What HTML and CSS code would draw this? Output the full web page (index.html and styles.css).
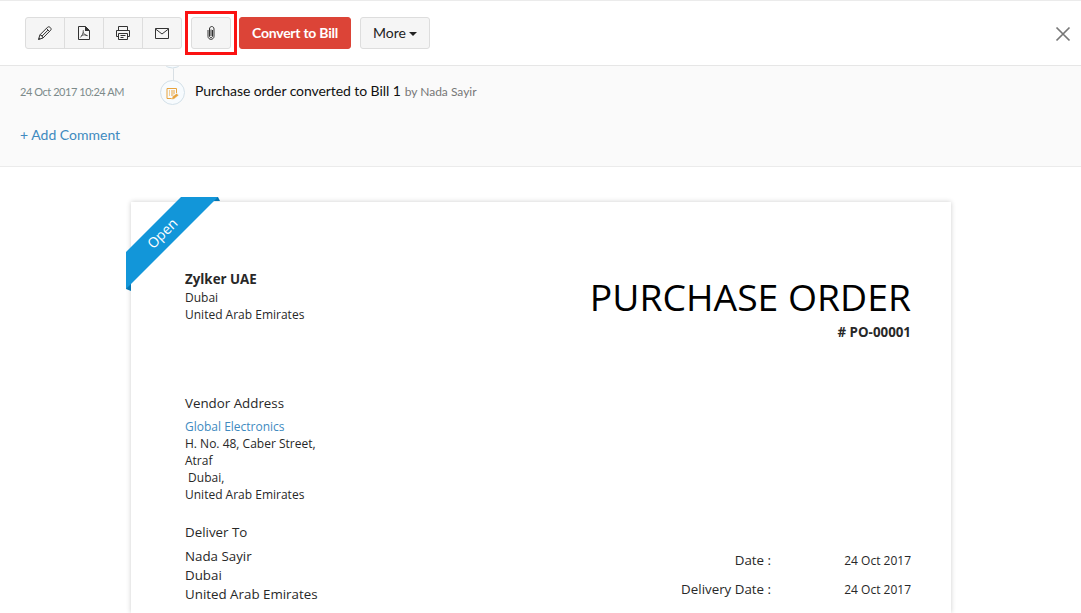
FILE: index.html
```html
<!DOCTYPE html>
<html lang="en">
<head>
  <meta charset="UTF-8" />
  <meta name="viewport" content="width=device-width, initial-scale=1.0"/>
  <title>Purchase Order</title>
  <link rel="stylesheet" href="styles.css">
</head>
<body>
  <header class="toolbar">
    <div class="btn-group">
      <button class="btn" aria-label="Edit">
        <svg width="16" height="16" viewBox="0 0 16 16"><path d="M1.5 14.5l1.4-4.6L10.6 2.2c1.5-1.5 4.7 1.4 3.1 3L6 13zM2.9 9.9c1.6.1 2.900 1.400 3.100 3.100M9.400 3.400l3.100 3.100M4.800 11.300l6.200-6.200"/><path class="fill" d="M1.3 14.7l.7-2.2 1.500 1.500z"/></svg>
      </button>
      <button class="btn" aria-label="PDF">
        <svg width="16" height="16" viewBox="0 0 16 16"><path d="M2.5 1.5h7l4 4v9h-11z"/><path class="fill" d="M9 1l5 5H9z"/><path class="thin" d="M7.3 5.2c.1 3-1.2 5.5-3 7.3M7.4 7.3c.6 1.9 2 3.1 4.2 3.3M5.5 10.5c1.8-.8 3.6-.9 5.8.2"/></svg>
      </button>
      <button class="btn" aria-label="Print">
        <svg width="16" height="16" viewBox="0 0 16 16"><path d="M3.5 5V1.5h9V5M3.5 11.5h-2v-6h13v6h-2M3.5 8.5h9v6h-9zM5.5 10.5h5M5.5 12.5h3"/></svg>
      </button>
      <button class="btn" aria-label="Email">
        <svg width="16" height="16" viewBox="0 0 16 16"><path d="M1.5 3.5h13v10h-13zM1.5 4L8 9l6.500-5"/></svg>
      </button>
    </div>
    <div class="highlight">
      <button class="btn btn-attach" aria-label="Attach">
        <svg width="16" height="16" viewBox="0 0 16 16"><path d="M5 5v6.300c0 4 6 4 6 0V4C11 .7 6.500.7 6.500 4v7c0 2.100 3 2.100 3 0V5M8 4.500v6.500"/></svg>
      </button>
    </div>
    <button class="btn btn-primary">Convert to Bill</button>
    <button class="btn btn-more">More <span class="caret"></span></button>
    <button class="close" aria-label="Close">
      <svg width="16" height="16" viewBox="0 0 16 16"><path d="M1.5 1.5l13 13M14.5 1.5l-13 13"/></svg>
    </button>
  </header>

  <section class="activity">
    <div class="activity-row">
      <span class="time">24 Oct 2017 10:24 AM</span>
      <span class="marker">
        <svg width="25" height="39" viewBox="0 0 25 39">
          <circle cx="12.5" cy="-10" r="12"/>
          <path class="line" d="M13.5 2.5V14"/>
          <circle cx="12.5" cy="26.5" r="12"/>
          <path class="note" d="M16.5 27v-4.500h-9.500v10h5M9 25h1M11 25h4M9 27h1M11 27h4M9 29h1M11 29h2.500"/>
          <path class="pen" d="M11.500 33.500l1-3 4.200-3.200 2 2-4.500 3.700z"/>
        </svg>
      </span>
      <span class="event">Purchase order converted to Bill 1</span>
      <span class="author">by Nada Sayir</span>
    </div>
    <a class="add-comment">+ Add Comment</a>
  </section>

  <main class="paper">
    <svg class="ribbon" width="94" height="95" viewBox="0 0 94 95">
      <path class="fold" d="M84 0h8l2 4H84zM0 84h5v10l-5-2z"/>
      <path class="band" d="M55 0h37L0 92V55z"/>
      <text x="37" y="41" transform="rotate(-45 37 37)">Open</text>
    </svg>
    <div class="doc-head">
      <div class="company">
        <strong>Zylker UAE</strong>
        <p>Dubai</p>
        <p>United Arab Emirates</p>
      </div>
      <div class="doc-title">
        <h1>PURCHASE ORDER</h1>
        <strong># PO-00001</strong>
      </div>
    </div>
    <div class="vendor">
      <h2>Vendor Address</h2>
      <a>Global Electronics</a>
      <p>H. No. 48, Caber Street,</p>
      <p>Atraf</p>
      <p>&nbsp;Dubai,</p>
      <p>United Arab Emirates</p>
    </div>
    <div class="doc-foot">
      <div class="deliver">
        <h2>Deliver To</h2>
        <p>Nada Sayir</p>
        <p>Dubai</p>
        <p>United Arab Emirates</p>
      </div>
      <div class="dates">
        <span class="label">Date :</span><span>24 Oct 2017</span>
        <span class="label">Delivery Date :</span><span>24 Oct 2017</span>
      </div>
    </div>
  </main>
</body>
</html>
```

FILE: styles.css
```css
* {
  box-sizing: border-box;
}

body {
  margin: 0;
  background: #fff;
  color: #222;
  font-family: Lato, 'Liberation Sans', sans-serif;
}

h1, h2, p {
  margin: 0;
  font-weight: normal;
}

svg {
  display: block;
  fill: none;
  stroke: #333;
}

.toolbar {
  display: flex;
  align-items: center;
  height: 66px;
  padding: 0 10px 0 25px;
  border-top: 1px solid #ebebeb;
  border-bottom: 1px solid #e6e6e6;
}

.btn {
  display: flex;
  align-items: center;
  justify-content: center;
  height: 32px;
  padding: 0;
  border: 1px solid #ddd;
  border-radius: 3px;
  background: #f5f5f5;
  color: #222;
  font: 14px Lato, 'Liberation Sans', sans-serif;
}

.btn-group {
  display: flex;
}

.btn-group .btn {
  width: 40px;
  margin-right: -1px;
  border-radius: 0;
}

.btn-group .btn:first-child {
  border-radius: 3px 0 0 3px;
}

.btn-group .btn:last-child {
  margin-right: 0;
  border-radius: 0 3px 3px 0;
}

.btn .fill {
  fill: #333;
  stroke: none;
}

.btn .thin {
  stroke-width: 0.8;
}

.highlight {
  display: flex;
  align-items: center;
  justify-content: center;
  width: 52px;
  height: 44px;
  margin: 0 2px 0 3px;
  border: 3px solid #fb1212;
}

.btn-attach {
  width: 40px;
}

.btn-primary {
  width: 112px;
  padding-bottom: 2px;
  border-color: #dc4437;
  background: #dc4437;
  color: #fff;
  font-weight: bold;
  letter-spacing: -0.25px;
}

.btn-more {
  width: 70px;
  margin-left: 9px;
  padding-bottom: 2px;
}

.caret {
  margin: 4px 0 0 3px;
  border: 4px solid transparent;
  border-top-color: #222;
  border-bottom: 0;
}

.close {
  margin: 2px 0 0 auto;
  padding: 0;
  border: 0;
  background: none;
}

.close svg {
  stroke: #777;
  stroke-width: 1.7;
}

.activity {
  height: 101px;
  padding-left: 20px;
  border-bottom: 1px solid #ebebeb;
  background: #fafafa;
}

.activity-row {
  display: flex;
  height: 52px;
  line-height: 52px;
}

.time {
  width: 140px;
  color: #7c8a8a;
  font-size: 11px;
  letter-spacing: -0.45px;
}

.marker {
  width: 35px;
}

.marker circle {
  fill: #f7fbfe;
  stroke: #d3e0e8;
}

.marker .line {
  stroke: #d8dfe4;
}

.marker .note {
  stroke: #e8a33d;
}

.marker .pen {
  fill: #e8a33d;
  stroke: #f7fbfe;
  stroke-width: 0.5;
}

.event {
  color: #111;
  font-size: 14px;
  line-height: 50px;
  letter-spacing: -0.08px;
}

.author {
  margin-left: 4px;
  color: #777;
  font-size: 12px;
}

.add-comment {
  display: block;
  margin-top: 7px;
  color: #408abf;
  font-size: 14px;
  line-height: 20px;
}

.paper {
  position: relative;
  width: 820px;
  height: 411px;
  margin: 35px 0 0 131px;
  padding: 68px 40px 0 54px;
  background: #fff;
  box-shadow: 0 0 5px rgba(0, 0, 0, 0.2);
  color: #282828;
  font: 12px/17px 'Open Sans', 'Noto Sans', sans-serif;
}

.ribbon {
  position: absolute;
  top: -5px;
  left: -5px;
  stroke: none;
}

.ribbon .band {
  fill: #1296d9;
}

.ribbon .fold {
  fill: #0675b0;
}

.ribbon text {
  fill: #fff;
  font-size: 14px;
  text-anchor: middle;
}

.doc-head {
  display: flex;
  justify-content: space-between;
  height: 124px;
}

.company strong {
  display: block;
  font-size: 13.33px;
  line-height: 19px;
}

.doc-title {
  text-align: right;
}

.doc-title h1 {
  color: #000;
  font-size: 37.33px;
  line-height: 54px;
}

.doc-title strong {
  display: block;
  font-size: 13.33px;
  line-height: 16px;
}

.vendor {
  height: 129px;
}

h2 {
  margin-bottom: 5px;
  font-size: 13.33px;
  line-height: 19px;
}

.vendor a {
  color: #408abf;
}

.doc-foot {
  display: flex;
  justify-content: space-between;
}

.deliver {
  height: 81px;
  font-size: 13.33px;
  line-height: 19px;
}

.dates {
  display: grid;
  grid-template-columns: auto 140px;
  grid-auto-rows: 29px;
  align-content: start;
  padding-top: 23px;
  line-height: 29px;
  text-align: right;
}

.label {
  font-size: 13.33px;
}
```
